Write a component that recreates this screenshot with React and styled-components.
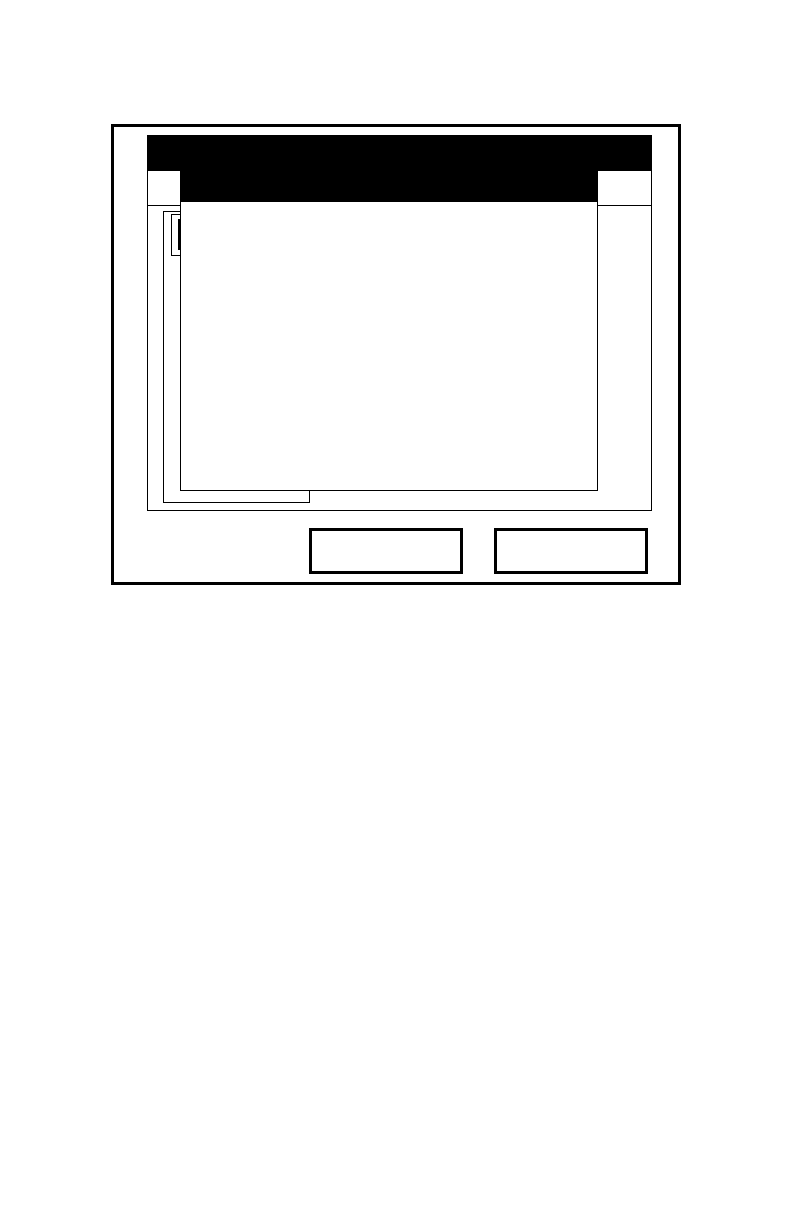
import styled, { createGlobalStyle } from "styled-components";

const GlobalStyle = createGlobalStyle`
  html, body {
    margin: 0;
    padding: 0;
    background: #fff;
    font-family: "Liberation Sans", Arial, sans-serif;
  }
  * { box-sizing: border-box; }
`;

const Page = styled.div`
  width: 792px;
  height: 1224px;
  padding: 124px 0 0 111px;
  background: #fff;
`;

const Frame = styled.div`
  width: 570px;
  height: 461px;
  border: 3px solid #000;
  padding: 8px 30px 8px 33px;
  display: flex;
  flex-direction: column;
`;

const Screen = styled.div`
  position: relative;
  width: 505px;
  height: 376px;
  border: 1px solid #000;
  display: flex;
  flex-direction: column;
`;

const TitleBar = styled.div`
  height: 35px;
  background: #000;
`;

const TabRow = styled.div`
  height: 35px;
  border-bottom: 1px solid #000;
`;

const Content = styled.div`
  flex: 1;
  padding: 5px 0 0 15px;
`;

const ListBox = styled.div`
  width: 147px;
  height: 292px;
  border: 1px solid #000;
  padding: 2px 0 0 7px;
`;

const Field = styled.div`
  width: 130px;
  height: 42px;
  border: 1px solid #000;
  padding: 4px 0 0 6px;
`;

const Cursor = styled.div`
  width: 3px;
  height: 31px;
  background: #000;
`;

const Popup = styled.div`
  position: absolute;
  left: 32px;
  top: 35px;
  width: 418px;
  height: 320px;
  border: 1px solid #000;
  border-top: none;
  background: #fff;
  display: flex;
  flex-direction: column;
`;

const PopupTitle = styled.div`
  height: 31px;
  margin: 0 -1px;
  background: #000;
`;

const ButtonRow = styled.div`
  display: flex;
  justify-content: flex-end;
  gap: 31px;
  margin-top: 17px;
`;

const SoftKey = styled.div`
  width: 154px;
  height: 46px;
  border: 3px solid #000;
  background: #fff;
`;

export default function App() {
  return (
    <>
      <GlobalStyle />
      <Page>
        <Frame>
          <Screen>
            <TitleBar />
            <TabRow />
            <Content>
              <ListBox>
                <Field>
                  <Cursor />
                </Field>
              </ListBox>
            </Content>
            <Popup>
              <PopupTitle />
            </Popup>
          </Screen>
          <ButtonRow>
            <SoftKey />
            <SoftKey />
          </ButtonRow>
        </Frame>
      </Page>
    </>
  );
}
